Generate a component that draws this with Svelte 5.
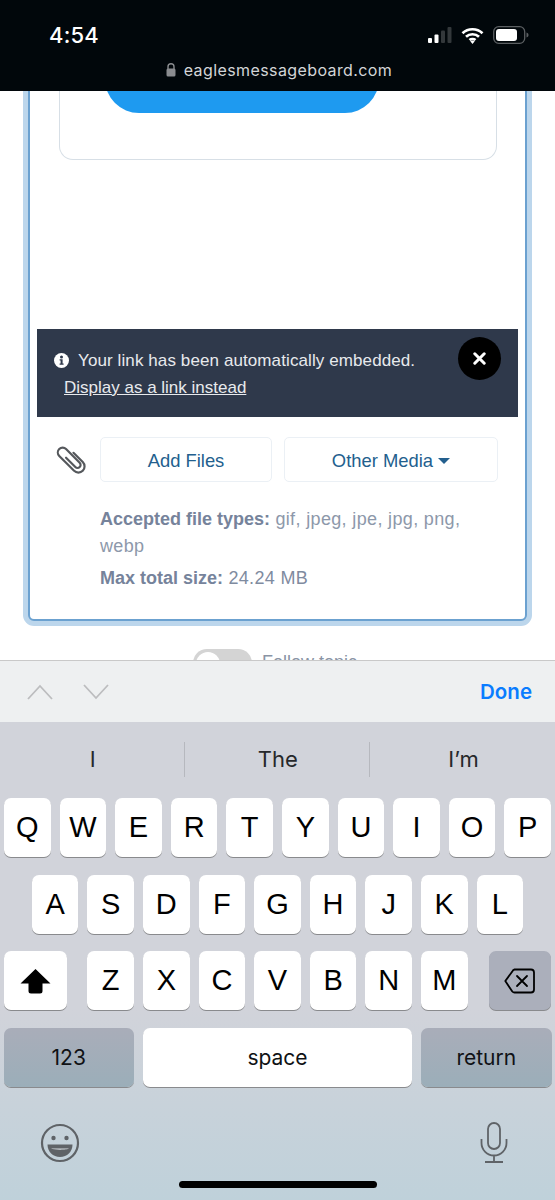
<script>
  const row1 = ['Q','W','E','R','T','Y','U','I','O','P'];
  const row2 = ['A','S','D','F','G','H','J','K','L'];
  const row3 = ['Z','X','C','V','B','N','M'];
  const suggestions = ['I','The','I’m'];
</script>

<div class="phone">
  <header class="status">
    <div class="status-top">
      <span class="time">4:54</span>
      <div class="indicators">
        <svg width="24" height="16" viewBox="0 0 24 16"><rect x="0" y="11" width="4" height="5" rx="1" fill="#fff"/><rect x="6.500" y="7.500" width="4" height="8.500" rx="1" fill="#fff"/><rect x="13" y="3.500" width="4" height="12.500" rx="1" fill="#33383b"/><rect x="19.500" y="0" width="4" height="16" rx="1" fill="#33383b"/></svg>
        <svg width="23" height="17" viewBox="0 0 23 17"><path d="M1.500 6.200C7 .9 16 .9 21.500 6.200M5 9.800c3.600-3.400 9.400-3.400 13 0M8.500 13.100c1.700-1.500 4.300-1.500 6 0" fill="none" stroke="#fff" stroke-width="2.700"/><path d="M11.500 17l-2.200-2.700c1.300-1 3.100-1 4.400 0z" fill="#fff"/></svg>
        <svg width="36" height="18" viewBox="0 0 36 18"><rect x="0.700" y="0.700" width="31" height="16.600" rx="5" fill="none" stroke="#5b5f62" stroke-width="1.300"/><rect x="3" y="3" width="21" height="12" rx="3" fill="#fff"/><path d="M33.500 6.500c1.500.4 2 1.400 2 2.500s-.5 2.100-2 2.500z" fill="#5b5f62"/></svg>
      </div>
    </div>
    <div class="address">
      <svg width="10" height="14" viewBox="0 0 10 14"><path d="M2 6V3.800a3 3 0 0 1 6 0V6" fill="none" stroke="#8a8c90" stroke-width="1.400"/><rect x="0.500" y="5.500" width="9" height="8" rx="1.500" fill="#8a8c90"/></svg>
      <span>eaglesmessageboard.com</span>
    </div>
  </header>

  <main class="web">
    <section class="editor">
      <div class="embed">
        <div class="embed-button"></div>
      </div>
      <div class="notice">
        <div class="notice-text">
          <p class="notice-line">
            <svg width="15" height="15" viewBox="0 0 15 15"><circle cx="7.500" cy="7.500" r="7.500" fill="#fff"/><circle cx="7.500" cy="3.900" r="1.500" fill="#2f394b"/><path d="M5.600 6.200h3v4.300h1v1.300H5.600v-1.300h1V7.500h-1z" fill="#2f394b"/></svg>
            <span>Your link has been automatically embedded.</span>
          </p>
          <a class="notice-link" href="#top">Display as a link instead</a>
        </div>
        <button class="close" aria-label="Close">
          <svg width="13" height="13" viewBox="0 0 13 13"><path d="M1.800 1.800l9.400 9.400M11.200 1.800l-9.400 9.400" stroke="#fff" stroke-width="3" stroke-linecap="round"/></svg>
        </button>
      </div>
      <div class="attach">
        <svg class="clip" width="28" height="30" viewBox="-2 -2 32 34"><g transform="rotate(-45 14 15)" fill="none" stroke="#55585c" stroke-width="2.500" stroke-linecap="round"><path d="M11 10V25a3.500 3.500 0 0 0 7 0V3a5.500 5.500 0 0 0-11 0V27a7 7 0 0 0 14 0V12"/></g></svg>
        <button class="file-btn add">Add Files</button>
        <button class="file-btn media">Other Media <i class="caret"></i></button>
      </div>
      <div class="file-info">
        <p><b>Accepted file types:</b> gif, jpeg, jpe, jpg, png, webp</p>
        <p class="max"><b>Max total size:</b> 24.24 MB</p>
      </div>
    </section>
    <div class="follow">
      <span class="toggle"><i></i></span>
      <span class="follow-label">Follow topic</span>
    </div>
  </main>

  <div class="toolbar">
    <div class="arrows">
      <svg width="26" height="16" viewBox="0 0 26 16"><path d="M1 15L13 2l12 13" fill="none" stroke="#bcbdbf" stroke-width="1.800"/></svg>
      <svg width="26" height="16" viewBox="0 0 26 16"><path d="M1 1l12 13L25 1" fill="none" stroke="#bcbdbf" stroke-width="1.800"/></svg>
    </div>
    <span class="done">Done</span>
  </div>

  <div class="keyboard">
    <div class="suggest">
      {#each suggestions as s}
        <div class="suggestion">{s}</div>
      {/each}
    </div>
    <div class="rows">
      <div class="row">
        {#each row1 as k}<div class="key">{k}</div>{/each}
      </div>
      <div class="row">
        {#each row2 as k}<div class="key">{k}</div>{/each}
      </div>
      <div class="row spread">
        <div class="key wide">
          <svg width="31" height="26" viewBox="0 0 31 26"><path d="M15.500 1L30.500 15.500H22.500V23a2.500 2.500 0 0 1-2.500 2.500H11A2.500 2.500 0 0 1 8.500 23V15.500H.5z" fill="#000"/></svg>
        </div>
        <div class="letters">
          {#each row3 as k}<div class="key">{k}</div>{/each}
        </div>
        <div class="key wide fn">
          <svg width="31" height="26" viewBox="0 0 31 26"><path d="M10.500 1.500H27a3 3 0 0 1 3 3v17a3 3 0 0 1-3 3H10.500a3 3 0 0 1-2.200-1L1.300 13l7-9.500a3 3 0 0 1 2.200-2z" fill="none" stroke="#000" stroke-width="1.800" stroke-linejoin="round"/><path d="M13 8l10 10M23 8L13 18" stroke="#000" stroke-width="1.800" stroke-linecap="round"/></svg>
        </div>
      </div>
      <div class="row">
        <div class="key side fn grad small">123</div>
        <div class="key space small">space</div>
        <div class="key side fn grad small">return</div>
      </div>
    </div>
    <div class="bottom">
      <svg width="40" height="40" viewBox="0 0 40 40"><circle cx="20" cy="20" r="18" fill="none" stroke="#5f6367" stroke-width="2.200"/><circle cx="13.500" cy="15" r="2.200" fill="#5f6367"/><circle cx="26.500" cy="15" r="2.200" fill="#5f6367"/><path d="M7.500 21.500h25c0 7.500-5.500 12.500-12.500 12.500S7.500 29 7.500 21.500z" fill="#5f6367"/><path d="M11 25.500h18c-1.800 1.500-15.500 1.500-18 0z" fill="#d8dde2"/></svg>
      <svg width="28" height="41" viewBox="0 0 28 41"><rect x="8" y="1" width="12" height="26" rx="6" fill="none" stroke="#5f6367" stroke-width="1.800"/><path d="M1.500 17v4a12.500 12.500 0 0 0 25 0v-4M14 33.500V40M5 40h18" fill="none" stroke="#5f6367" stroke-width="1.800"/></svg>
    </div>
    <div class="home"></div>
  </div>
</div>

<style>
  :global(body) { margin: 0; background: #fff; }
  .phone {
    width: 555px;
    height: 1200px;
    overflow: hidden;
    display: flex;
    flex-direction: column;
    font-family: "Liberation Sans", Arial, sans-serif;
  }
  .status {
    height: 91px;
    flex: none;
    background: #01070b;
    box-sizing: border-box;
    padding: 22px 26px 0 49px;
    color: #fff;
  }
  .status-top { display: flex; justify-content: space-between; align-items: center; height: 26px; }
  .time { font-family: Inter, sans-serif; font-weight: 500; font-size: 22px; letter-spacing: 0.2px; }
  .indicators { display: flex; align-items: center; gap: 9px; }
  .address {
    display: flex;
    align-items: center;
    justify-content: center;
    gap: 8px;
    margin-top: 12px;
    padding-right: 20px;
    font-family: Inter, sans-serif;
    font-size: 16px;
    letter-spacing: 0.4px;
    color: #d3d5d7;
  }
  .web {
    height: 569px;
    flex: none;
    overflow: hidden;
    background: #fff;
    padding: 0 28px;
    box-sizing: border-box;
  }
  .editor {
    margin-top: -100px;
    height: 630px;
    box-sizing: border-box;
    border: 2px solid #6ba1d0;
    border-radius: 6px;
    box-shadow: 0 0 0 5px #bcd6ec;
    background: #fff;
  }
  .embed {
    margin: 0 28px 0 29px;
    height: 167px;
    box-sizing: border-box;
    border: 1.500px solid #d7dfe6;
    border-top: none;
    border-radius: 0 0 14px 14px;
  }
  .embed-button {
    margin: 0 0 0 45px;
    width: 274px;
    height: 120px;
    background: #1e9af0;
    border-radius: 0 0 34px 34px;
  }
  .notice {
    margin: 169px 7px 0;
    height: 88px;
    background: #2f394b;
    color: #e8eaed;
    font-size: 17px;
    display: flex;
    justify-content: space-between;
    box-sizing: border-box;
    padding: 8px 17px 0 17px;
  }
  .notice-text { padding-top: 10px; }
  .notice-line { margin: 0; display: flex; align-items: center; gap: 9px; height: 27px; line-height: 27px; letter-spacing: 0.1px; }
  .notice-link { display: block; color: #e8eaed; margin: 0 0 0 10px; line-height: 27px; }
  .close {
    width: 43px;
    height: 43px;
    border-radius: 50%;
    border: none;
    padding: 0;
    background: #000;
    display: flex;
    align-items: center;
    justify-content: center;
  }
  .attach { display: flex; align-items: center; margin: 20px 27px 0 27px; height: 45px; }
  .clip { margin-right: 15px; flex: none; margin-top: -2px; overflow: visible; }
  .file-btn {
    height: 45px;
    background: #fff;
    border: 1.500px solid #ebf0f5;
    border-radius: 5px;
    color: #235f8e;
    font-family: inherit;
    font-size: 18.400px;
    padding: 2px 0 0;
  }
  .add { width: 172px; margin-right: 12px; }
  .media { width: 214px; }
  .caret {
    display: inline-block;
    width: 0;
    height: 0;
    border-left: 6px solid transparent;
    border-right: 6px solid transparent;
    border-top: 6px solid #235f8e;
    vertical-align: 3px;
  }
  .file-info {
    margin: 24px 60px 0 70px;
    font-size: 18px;
    line-height: 27px;
    letter-spacing: 0.35px;
    color: #8d98aa;
  }
  .file-info p { margin: 0; }
  .file-info b { color: #76839b; letter-spacing: 0; }
  .file-info .max { margin-top: 5px; color: #7f8ba0; }
  .follow {
    display: flex;
    gap: 10px;
    margin: 28px 0 0 165px;
    color: #8a94a5;
    font-size: 18px;
  }
  .toggle {
    width: 59px;
    height: 28px;
    border-radius: 14px;
    background: #d4d4d4;
    box-sizing: border-box;
    padding: 3px;
  }
  .toggle i { display: block; width: 24px; height: 24px; border-radius: 50%; background: #fff; }
  .follow-label { padding-top: 3px; }
  .toolbar {
    height: 62px;
    flex: none;
    box-sizing: border-box;
    background: #eef0f1;
    border-top: 1px solid #c9c9c9;
    display: flex;
    align-items: center;
    justify-content: space-between;
    padding: 0 23px 0 27px;
  }
  .arrows { display: flex; gap: 30px; }
  .done { color: #0a7cff; font-family: Inter, sans-serif; font-weight: 600; font-size: 20.500px; }
  .keyboard {
    flex: 1;
    background: linear-gradient(#d1d3da 0, #d1d3da 60%, #bfd1da 100%);
    display: flex;
    flex-direction: column;
  }
  .suggest { height: 76px; flex: none; display: grid; grid-template-columns: 183.500px 185.500px 1fr; align-items: center; }
  .suggestion {
    height: 35px;
    line-height: 35px;
    margin-top: -1px;
    padding-left: 2px;
    text-align: center;
    font-family: Inter, sans-serif;
    font-size: 22px;
    color: #26282b;
    box-sizing: border-box;
  }
  .suggestion + .suggestion { border-left: 1px solid #b6b8be; }
  .rows { display: flex; flex-direction: column; gap: 16.700px; padding: 0 4px; }
  .row { display: flex; justify-content: center; gap: 9px; height: 60px; }
  .row.spread { justify-content: space-between; gap: 0; }
  .letters { display: flex; gap: 9px; }
  .key {
    width: 46.600px;
    height: 59px;
    flex: none;
    background: #fff;
    border-radius: 7px;
    box-shadow: 0 1px 0 #898a8d;
    display: flex;
    align-items: center;
    justify-content: center;
    font-family: "Liberation Sans", Arial, sans-serif;
    font-size: 29px;
    color: #000;
  }
  .wide { width: 62.500px; }
  .fn { background: #abafbb; }
  .side { width: 130.500px; }
  .grad { background: linear-gradient(#a9adb9, #9baeb9); }
  .space { width: 269px; }
  .small { font-family: Inter, sans-serif; font-size: 21px; color: #101215; }
  .bottom {
    display: flex;
    justify-content: space-between;
    align-items: center;
    padding: 0 47px 0 40px;
    margin-top: 34px;
    height: 41px;
  }
  .home {
    width: 198px;
    height: 7px;
    border-radius: 4px;
    background: #000;
    margin: 18px auto 0 179px;
  }
</style>
